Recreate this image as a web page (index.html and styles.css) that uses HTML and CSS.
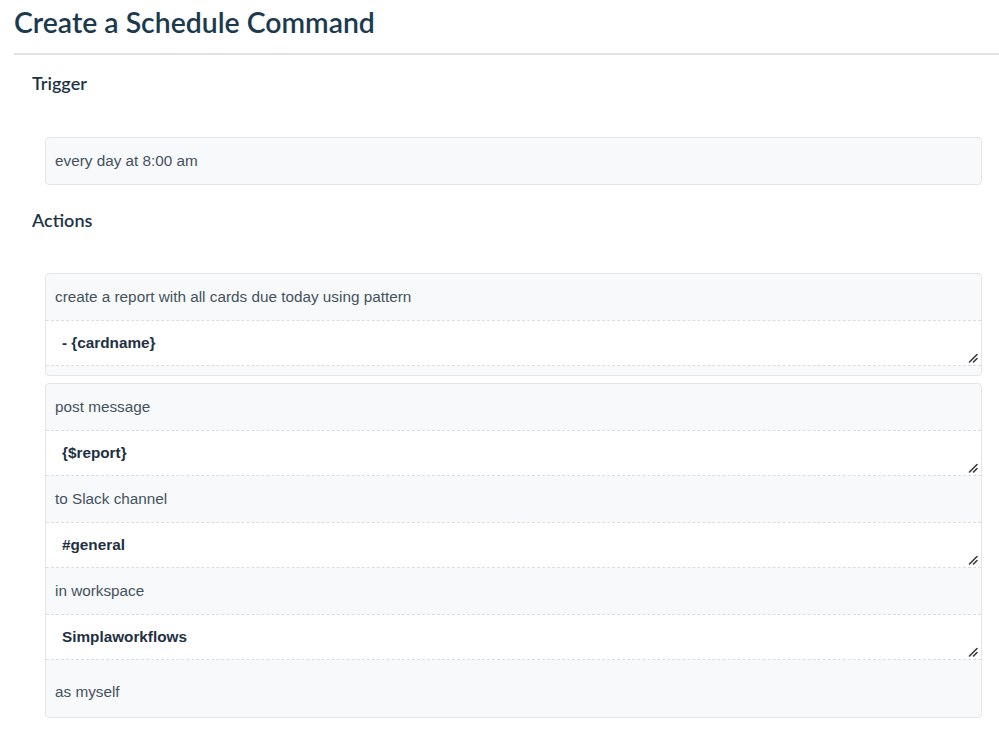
FILE: index.html
```html
<!DOCTYPE html>
<html lang="en">
<head>
<meta charset="utf-8">
<title>Create a Schedule Command</title>
<link rel="stylesheet" href="styles.css">
</head>
<body>
<div class="page">
  <h1 class="title">Create a Schedule Command</h1>
  <div class="rule"></div>
  <div class="section">
    <h2 class="heading heading-first">Trigger</h2>
    <div class="box box-first">
      <div class="label">every day at 8:00 am</div>
    </div>

    <h2 class="heading">Actions</h2>
    <div class="box box-first">
      <div class="label">create a report with all cards due today using pattern</div>
      <div class="field-wrap field-gap">
        <textarea class="field" rows="1">- {cardname}</textarea>
        <svg class="grip" width="10" height="10" viewBox="0 0 10 10" aria-hidden="true"><path d="M1.5 9 L9 1.5 M5.5 9 L9 5.5" stroke="#3a3a3a" stroke-width="1.6" stroke-linecap="round" fill="none"/></svg>
      </div>
    </div>
    <div class="box box-next">
      <div class="label">post message</div>
      <div class="field-wrap">
        <textarea class="field" rows="1">{$report}</textarea>
        <svg class="grip" width="10" height="10" viewBox="0 0 10 10" aria-hidden="true"><path d="M1.5 9 L9 1.5 M5.5 9 L9 5.5" stroke="#3a3a3a" stroke-width="1.6" stroke-linecap="round" fill="none"/></svg>
      </div>
      <div class="label">to Slack channel</div>
      <div class="field-wrap">
        <textarea class="field" rows="1">#general</textarea>
        <svg class="grip" width="10" height="10" viewBox="0 0 10 10" aria-hidden="true"><path d="M1.5 9 L9 1.5 M5.5 9 L9 5.5" stroke="#3a3a3a" stroke-width="1.6" stroke-linecap="round" fill="none"/></svg>
      </div>
      <div class="label">in workspace</div>
      <div class="field-wrap field-gap">
        <textarea class="field" rows="1">Simplaworkflows</textarea>
        <svg class="grip" width="10" height="10" viewBox="0 0 10 10" aria-hidden="true"><path d="M1.5 9 L9 1.5 M5.5 9 L9 5.5" stroke="#3a3a3a" stroke-width="1.6" stroke-linecap="round" fill="none"/></svg>
      </div>
      <div class="label label-last">as myself</div>
    </div>
  </div>
</div>
</body>
</html>
```

FILE: styles.css
```css
html, body {
  margin: 0;
  padding: 0;
  background: #ffffff;
}

body {
  font-family: "Liberation Sans", Arial, sans-serif;
  color: #3e4c57;
}

.page {
  padding: 5px 0 0 14px;
}

.title {
  margin: 0;
  font-family: Lato, "Open Sans", sans-serif;
  font-size: 28.4px;
  font-weight: 600;
  line-height: 34px;
  color: #1b3a4e;
}

.rule {
  margin-top: 14px;
  height: 2px;
  background: #e2e2e2;
}

.section {
  padding-left: 18px;
}

.heading {
  margin: 24px 0 0 0;
  font-family: Lato, "Open Sans", sans-serif;
  font-size: 18px;
  font-weight: 600;
  line-height: 22px;
  color: #1e3446;
}

.heading-first {
  margin-top: 17px;
}

.box {
  margin: 7px 17px 0 13px;
  border: 1px solid #e3e5e8;
  border-radius: 4px;
  background: #f8f9fb;
  overflow: hidden;
}

.box-first {
  margin-top: 42px;
}

.heading-first + .box-first {
  margin-top: 43px;
}

.label {
  height: 46px;
  line-height: 46px;
  padding: 0 9px;
  font-size: 15.3px;
  color: #44525d;
  white-space: nowrap;
}

.label-last {
  height: 48px;
}

.field-wrap {
  position: relative;
}

.field {
  display: block;
  box-sizing: border-box;
  width: 100%;
  height: 46px;
  margin: 0;
  padding: 12px 16px;
  border: none;
  border-top: 1px dashed #dadde1;
  border-bottom: 1px dashed #dadde1;
  border-radius: 0;
  background: #ffffff;
  font-family: "Liberation Sans", Arial, sans-serif;
  font-size: 15.3px;
  font-weight: 700;
  line-height: 20px;
  color: #1f3142;
  resize: none;
  overflow: hidden;
  outline: none;
}

.grip {
  position: absolute;
  right: 3px;
  bottom: 3px;
}

.field-gap {
  margin-bottom: 9px;
}
```
